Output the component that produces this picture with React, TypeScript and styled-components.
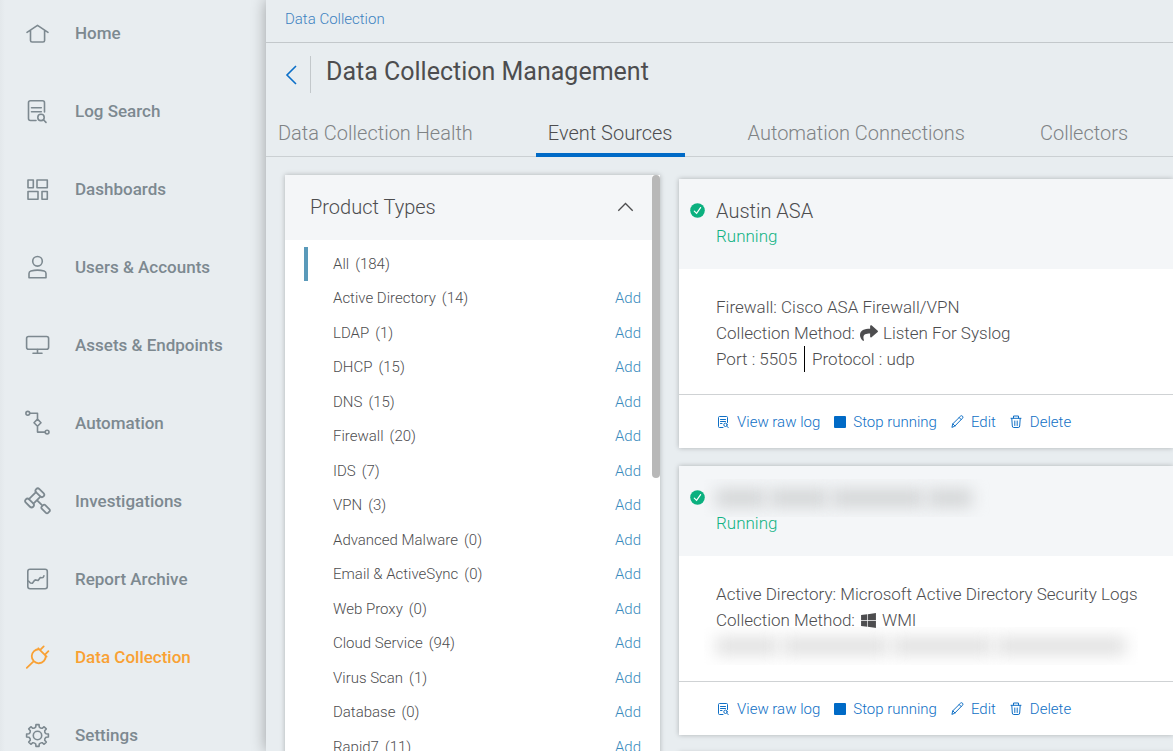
import React from "react";
import styled, { createGlobalStyle } from "styled-components";
import { FaShare, FaWindows } from "react-icons/fa";

const GlobalStyle = createGlobalStyle`
  *, *::before, *::after { box-sizing: border-box; }
  html, body { margin: 0; height: 100%; }
  body {
    background: #e8edf0;
    color: #4d4d4f;
    font-family: Roboto, "Liberation Sans", sans-serif;
    font-weight: 300;
    overflow: hidden;
  }
  button { font: inherit; color: inherit; background: none; border: 0; padding: 0; cursor: pointer; }
  a { color: inherit; text-decoration: none; }
  svg { display: block; flex: none; }
  ul { list-style: none; margin: 0; padding: 0; }
  h1, h2, p { margin: 0; font-weight: inherit; }
`;

const Shell = styled.div`
  display: flex;
  height: 100vh;
  overflow: hidden;
`;

const Sidebar = styled.nav`
  flex: 0 0 266px;
  padding-top: 21px;
  background: linear-gradient(to right, #e3e8eb, #e8edf0 5px);
`;

const NavList = styled.ul`
  display: flex;
  flex-direction: column;
  gap: 54px;
`;

const NavLink = styled.a<{ $active?: boolean }>`
  display: flex;
  align-items: center;
  height: 24px;
  padding-left: 23px;
  gap: 24px;
  font-size: 17px;
  line-height: 24px;
  font-weight: 500;
  color: ${(p) => (p.$active ? "#f9a134" : "#7d8990")};
`;

const Main = styled.main`
  flex: 1;
  min-width: 0;
  display: flex;
  flex-direction: column;
  background: #e8edf0;
  box-shadow: 0 0 14px rgba(0, 0, 0, 0.32);
`;

const Breadcrumbs = styled.nav`
  padding: 7px 19px 11px;
  border-bottom: 1px solid #c3c8cb;
  font-size: 15px;
  line-height: 24px;
  color: #3d82c0;
`;

const TitleBar = styled.header`
  display: flex;
  padding: 13px 19px 0;
`;

const BackButton = styled.button`
  display: flex;
  align-items: center;
  width: 26px;
  height: 37px;
  border-right: 1px solid #c3c8cb;
  color: #0b6fc8;
`;

const PageTitle = styled.h1`
  padding-left: 15px;
  font-size: 25px;
  line-height: 32px;
  font-weight: 400;
`;

const Tabs = styled.div`
  display: flex;
  gap: 51px;
  margin-top: 17px;
  border-bottom: 1px solid #cbd0d3;
  white-space: nowrap;
`;

const Tab = styled.button<{ $active?: boolean }>`
  height: 47px;
  margin-bottom: -1px;
  padding: 2px 12px 0;
  border-bottom: 4px solid ${(p) => (p.$active ? "#006ac6" : "transparent")};
  font-size: 20px;
  line-height: 24px;
  color: ${(p) => (p.$active ? "#4d4d4f" : "#7f8385")};
`;

const Content = styled.div`
  display: flex;
  align-items: flex-start;
  gap: 19px;
  padding: 18px 0 0 19px;
`;

const Panel = styled.section`
  position: relative;
  flex: 0 0 375px;
  padding-right: 8px;
  background: #fff;
  box-shadow: 0 0 5px rgba(0, 0, 0, 0.25);
`;

const ScrollThumb = styled.div`
  position: absolute;
  top: 0;
  right: 0;
  width: 8px;
  height: 303px;
  border-radius: 4px;
  background: #b8b8b8;
`;

const PanelHeader = styled.header`
  display: flex;
  align-items: center;
  justify-content: space-between;
  height: 65px;
  padding: 0 18px 1px 25px;
  background: #f4f6f8;
`;

const PanelTitle = styled.h2`
  font-size: 20px;
  line-height: 24px;
`;

const TypeList = styled.ul`
  display: grid;
  grid-auto-rows: 34px 35px;
  padding: 7px 0;
  font-size: 15px;
  line-height: 20px;
`;

const TypeRow = styled.li<{ $active?: boolean }>`
  display: flex;
  align-items: flex-start;
  gap: 6px;
  margin-left: 19px;
  padding: 7px 11px 0 25px;
  border-left: 4px solid ${(p) => (p.$active ? "#5a9aba" : "transparent")};
`;

const AddButton = styled.button`
  margin-left: auto;
  color: #3a8bbd;
`;

const Cards = styled.div`
  flex: 1;
  min-width: 0;
  display: flex;
  flex-direction: column;
  gap: 18px;
  padding-top: 4px;
`;

const Card = styled.article`
  min-height: 64px;
  background: #fff;
  box-shadow: 0 0 5px rgba(0, 0, 0, 0.25);
`;

const CardHeader = styled.header`
  display: grid;
  grid-template-columns: 26px 1fr;
  grid-template-rows: 25px 26px;
  align-items: center;
  padding: 19px 11px 20px;
  background: #f4f6f8;
`;

const CardName = styled.h2`
  font-size: 20px;
  line-height: 26px;
`;

const Status = styled.p`
  grid-column: 2;
  font-size: 17px;
  line-height: 26px;
  color: #12b385;
`;

const CardBody = styled.div`
  padding: 25px 0 22px 37px;
  border-bottom: 1px solid #cfd2d4;
  font-size: 17px;
  line-height: 26px;
  white-space: nowrap;
`;

const Line = styled.p`
  display: flex;
  align-items: center;
  height: 26px;
  gap: 5px;
`;

const Protocol = styled.span`
  margin-left: 2px;
  padding-left: 7px;
  border-left: 1px solid #000;
`;

const CardActions = styled.footer`
  display: flex;
  align-items: center;
  gap: 14px;
  height: 53px;
  padding-left: 39px;
  font-size: 15px;
  line-height: 24px;
  color: #0f6fc5;
`;

const Action = styled.button`
  display: flex;
  align-items: center;
  gap: 7px;
  white-space: nowrap;
`;

const Redacted = styled.span<{ $tone: string }>`
  display: flex;
  align-items: center;
  gap: 4px;
  height: 38px;
  margin-left: -12px;
  padding: 0 12px;
  overflow: hidden;
  color: ${(p) => p.$tone};
`;

const Smudge = styled.span<{ $width: number }>`
  flex: 0 0 ${(p) => p.$width}px;
  height: 18px;
  background: currentColor;
  filter: blur(8px);
`;

const Icon = ({ size = 28, w = 1.6, children }: { size?: number; w?: number; children: React.ReactNode }) => (
  <svg
    width={size}
    height={size}
    viewBox={`0 0 ${size} ${size}`}
    fill="none"
    stroke="currentColor"
    strokeWidth={w}
    strokeLinecap="round"
    strokeLinejoin="round"
    aria-hidden="true"
  >
    {children}
  </svg>
);

// Eight-toothed outline, starting from the tooth at twelve o'clock.
const gearOutline = () => {
  const parts: string[] = [];
  const at = (deg: number, r: number) => {
    const a = (deg * Math.PI) / 180;
    return `${(14.5 + r * Math.cos(a)).toFixed(2)} ${(14.5 + r * Math.sin(a)).toFixed(2)}`;
  };
  for (let i = 0; i < 8; i++) {
    const c = i * 45 - 90;
    parts.push(`${i ? "L" : "M"}${at(c - 8, 11)}L${at(c + 8, 11)}L${at(c + 12, 8.6)}`);
    parts.push(`Q${at(c + 22.5, 7.6)} ${at(c + 33, 8.6)}`);
  }
  return parts.join("") + "Z";
};

const icons = {
  home: (
    <Icon>
      <path d="M4 13.4 14.500 6.300 25 13.400M7.500 11.500v9.900a1.600 1.600 0 0 0 1.600 1.600h10.900a1.600 1.600 0 0 0 1.600-1.600v-9.900" />
    </Icon>
  ),
  log: (
    <Icon>
      <path d="M13 23.500H7.500a2 2 0 0 1-2-2V5.800a2 2 0 0 1 2-2h12a2 2 0 0 1 2 2v9.200M8.500 10.700h9.800M8.500 14.700h9.800" />
      <circle cx="18" cy="20.400" r="3.200" />
      <path d="m20.400 22.800 2.600 2.600" />
    </Icon>
  ),
  dashboards: (
    <Icon>
      <path d="M5 5h5.300v7.800H5zM14 5h10.300v7.800H14zM5 16.500h10v7.800H5zM19 16.500h5.300v7.800H19z" />
    </Icon>
  ),
  users: (
    <Icon>
      <circle cx="14.500" cy="8.300" r="4.800" />
      <path d="M6 24.800v-4.200a2.600 2.600 0 0 1 1.900-2.500q6.600-2 13.200 0a2.600 2.600 0 0 1 1.900 2.500v4.200z" />
    </Icon>
  ),
  assets: (
    <Icon>
      <rect x="3.600" y="5.500" width="22" height="12.800" rx="2" />
      <path d="M14.500 18.500v3.500M10 22.300h9" />
    </Icon>
  ),
  automation: (
    <Icon>
      <circle cx="4.800" cy="4.300" r="1.900" />
      <path d="M6.900 4.300h7.600v5.800M14.500 10.100l3.500 3.600-3.500 3.600-3.500-3.600zM14.500 17.300v5.800h7.500" />
      <circle cx="24.100" cy="23.100" r="1.900" />
    </Icon>
  ),
  investigations: (
    <Icon w={1.8}>
      <g transform="translate(11.700 10.900) rotate(45)">
        <rect x="-5.200" y="-9.600" width="10.400" height="4.600" rx="2.300" />
        <rect x="-5.200" y="5" width="10.400" height="4.600" rx="2.300" />
        <path d="M-3.200-5V5M3.200-5V5M3.400 0h6.600" />
      </g>
      <rect x="-4.500" y="-2.500" width="9" height="5" rx="1.500" transform="translate(22.600 22) rotate(45)" />
    </Icon>
  ),
  report: (
    <Icon>
      <rect x="4.800" y="4.300" width="19.500" height="19.500" rx="2.200" />
      <path d="m5.500 16 1.900 2 2 .2 2.200-3 1.300-.3 2.200.6 2.200-3 1.200.2 1.600-.2.800-1.700" />
    </Icon>
  ),
  collection: (
    <Icon w={1.8}>
      <path d="m3.800 24.800 7-6.700M20.700 3.400l-3.700 3.700M25.400 8.100l-3.700 3.700M15.300 5.300l8.300 8.300M16.300 6.300A7 7 0 1 0 22.700 12.700" />
    </Icon>
  ),
  settings: (
    <Icon>
      <path d={gearOutline()} />
      <circle cx="14.500" cy="14.500" r="4.200" />
    </Icon>
  ),
};

const navItems: { label: string; icon: React.ReactNode; active?: boolean }[] = [
  { label: "Home", icon: icons.home },
  { label: "Log Search", icon: icons.log },
  { label: "Dashboards", icon: icons.dashboards },
  { label: "Users & Accounts", icon: icons.users },
  { label: "Assets & Endpoints", icon: icons.assets },
  { label: "Automation", icon: icons.automation },
  { label: "Investigations", icon: icons.investigations },
  { label: "Report Archive", icon: icons.report },
  { label: "Data Collection", icon: icons.collection, active: true },
  { label: "Settings", icon: icons.settings },
];

const tabs = ["Data Collection Health", "Event Sources", "Automation Connections", "Collectors"];

const productTypes: [string, number][] = [
  ["All", 184],
  ["Active Directory", 14],
  ["LDAP", 1],
  ["DHCP", 15],
  ["DNS", 15],
  ["Firewall", 20],
  ["IDS", 7],
  ["VPN", 3],
  ["Advanced Malware", 0],
  ["Email & ActiveSync", 0],
  ["Web Proxy", 0],
  ["Cloud Service", 94],
  ["Virus Scan", 1],
  ["Database", 0],
  ["Rapid7", 11],
];

const CheckBadge = () => (
  <svg width="15" height="15" viewBox="0 0 15 15" role="img" aria-label="Healthy">
    <circle cx="7.500" cy="7.500" r="7.300" fill="#0bb07f" />
    <path d="m4.300 8.100 2.300 2.300 4-5.800" fill="none" stroke="#fff" strokeWidth="1.200" strokeLinecap="round" />
  </svg>
);

const Actions = () => (
  <CardActions>
    <Action type="button">
      <Icon size={12} w={1}>
        <path d="M5 11.500H1.500a1 1 0 0 1-1-1v-9a1 1 0 0 1 1-1h7a1 1 0 0 1 1 1V6.500M2.500 3.500h5M2.500 5.500h5M2.500 7.500h1.500" />
        <circle cx="7.500" cy="8.800" r="1.700" />
        <path d="m8.800 10.200 1.700 1.600" />
      </Icon>
      View raw log
    </Action>
    <Action type="button">
      <svg width="12" height="12" viewBox="0 0 12 12" aria-hidden="true">
        <rect width="12" height="12" rx="1" fill="#006ac6" />
      </svg>
      Stop running
    </Action>
    <Action type="button">
      <Icon size={13} w={1}>
        <path d="m1 12 .8-3.200 7.700-7.600a1.300 1.300 0 0 1 2 2L3.900 11zM8.200 2.600l2 2M1.800 8.800 4 11" />
      </Icon>
      Edit
    </Action>
    <Action type="button">
      <Icon size={13} w={1}>
        <path d="M1 3.300h10M3.500 3V1h5v2M1.800 3.500l.5 7.500a1.500 1.500 0 0 0 1.500 1.500h4.400a1.500 1.500 0 0 0 1.500-1.500l.5-7.500M4.800 6v4.500M7.200 6v4.500" />
      </Icon>
      Delete
    </Action>
  </CardActions>
);

export default function App() {
  return (
    <>
      <GlobalStyle />
      <Shell>
        <Sidebar aria-label="Primary">
          <NavList>
            {navItems.map((item) => (
              <li key={item.label}>
                <NavLink href="#" $active={item.active}>
                  {item.icon}
                  {item.label}
                </NavLink>
              </li>
            ))}
          </NavList>
        </Sidebar>
        <Main>
          <Breadcrumbs aria-label="Breadcrumb">
            <a href="#">Data Collection</a>
          </Breadcrumbs>
          <TitleBar>
            <BackButton type="button" aria-label="Back">
              <svg width="13" height="20" viewBox="0 0 13 20" fill="none" stroke="currentColor" strokeWidth="1.600" aria-hidden="true">
                <path d="M11 1 2 10l9 9" />
              </svg>
            </BackButton>
            <PageTitle>Data Collection Management</PageTitle>
          </TitleBar>
          <Tabs role="tablist">
            {tabs.map((tab) => (
              <Tab key={tab} type="button" role="tab" aria-selected={tab === "Event Sources"} $active={tab === "Event Sources"}>
                {tab}
              </Tab>
            ))}
          </Tabs>
          <Content>
            <Panel>
              <PanelHeader>
                <PanelTitle>Product Types</PanelTitle>
                <button type="button" aria-label="Collapse product types">
                  <svg width="17" height="10" viewBox="0 0 17 10" fill="none" stroke="currentColor" strokeWidth="1.300" aria-hidden="true">
                    <path d="m1.300 8.700 7.200-7.200 7.200 7.200" />
                  </svg>
                </button>
              </PanelHeader>
              <TypeList>
                {productTypes.map(([name, count], i) => (
                  <TypeRow key={name} $active={i === 0}>
                    <span>{name}</span>
                    <span>({count})</span>
                    {i > 0 && (
                      <AddButton type="button" aria-label={`Add ${name}`}>
                        Add
                      </AddButton>
                    )}
                  </TypeRow>
                ))}
              </TypeList>
              <ScrollThumb />
            </Panel>
            <Cards>
              <Card>
                <CardHeader>
                  <CheckBadge />
                  <CardName>Austin ASA</CardName>
                  <Status>Running</Status>
                </CardHeader>
                <CardBody>
                  <Line>Firewall: Cisco ASA Firewall/VPN</Line>
                  <Line>
                    Collection Method: <FaShare size={18} aria-hidden="true" /> Listen For Syslog
                  </Line>
                  <Line>
                    <span>Port : 5505</span>
                    <Protocol>Protocol : udp</Protocol>
                  </Line>
                </CardBody>
                <Actions />
              </Card>
              <Card>
                <CardHeader>
                  <CheckBadge />
                  <Redacted $tone="#d2d4d5" aria-hidden="true">
                    <Smudge $width={50} />
                    <Smudge $width={58} />
                    <Smudge $width={92} />
                    <Smudge $width={44} />
                  </Redacted>
                  <Status>Running</Status>
                </CardHeader>
                <CardBody>
                  <Line>Active Directory: Microsoft Active Directory Security Logs</Line>
                  <Line>
                    Collection Method: <FaWindows size={17} aria-hidden="true" /> WMI
                  </Line>
                  <Line>
                    <Redacted $tone="#e0e0e0" aria-hidden="true">
                      <Smudge $width={62} />
                      <Smudge $width={106} />
                      <Smudge $width={100} />
                      <Smudge $width={130} />
                    </Redacted>
                  </Line>
                </CardBody>
                <Actions />
              </Card>
              <Card />
            </Cards>
          </Content>
        </Main>
      </Shell>
    </>
  );
}
